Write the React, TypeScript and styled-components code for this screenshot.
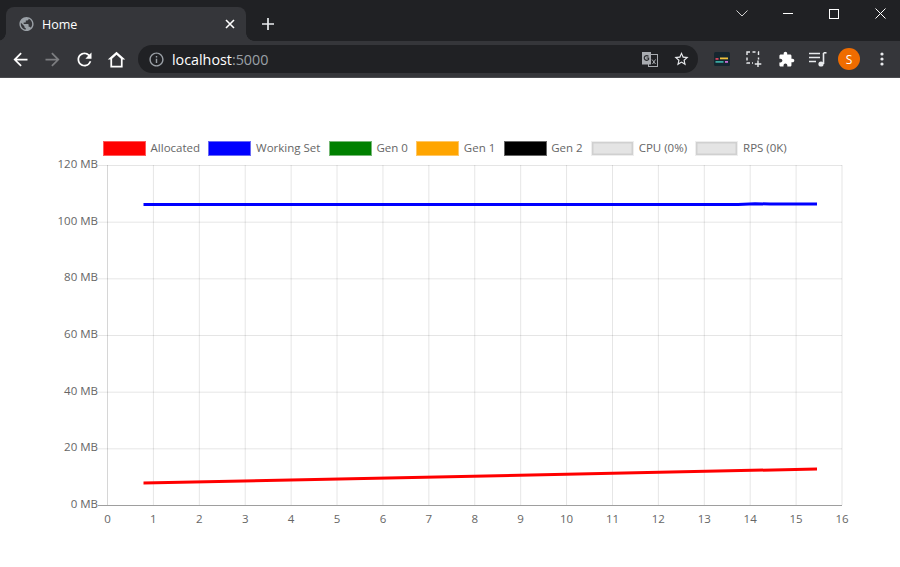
import React from 'react';
import styled, { createGlobalStyle } from 'styled-components';

const GlobalStyle = createGlobalStyle`
  html, body {
    margin: 0;
    padding: 0;
    background: #ffffff;
    font-family: "Open Sans", "Noto Sans", sans-serif;
  }
`;

const Page = styled.div`
  width: 900px;
  height: 567px;
  overflow: hidden;
  display: flex;
  flex-direction: column;
`;

const TitleBar = styled.div`
  height: 41px;
  background: #202124;
  display: flex;
  align-items: flex-end;
  padding-left: 6px;
`;

const Tab = styled.div`
  position: relative;
  width: 240px;
  height: 34px;
  box-sizing: border-box;
  background: #35363a;
  border-radius: 8px 8px 0 0;
  display: flex;
  align-items: center;
  padding: 0 11px 0 12px;
  color: #ffffff;
  font-size: 12.5px;

  &::before,
  &::after {
    content: '';
    position: absolute;
    bottom: 0;
    width: 8px;
    height: 8px;
  }

  &::before {
    left: -8px;
    background: radial-gradient(circle at 0 0, #202124 7.5px, #35363a 8px);
  }

  &::after {
    right: -8px;
    background: radial-gradient(circle at 100% 0, #202124 7.5px, #35363a 8px);
  }
`;

const TabTitle = styled.span`
  flex: 1;
  margin-left: 7px;
  margin-top: 1px;
`;

const NewTab = styled.div`
  width: 28px;
  height: 28px;
  margin-left: 8px;
  margin-bottom: 3px;
  display: flex;
  align-items: center;
  justify-content: center;
  color: #e8eaed;
`;

const WindowControls = styled.div`
  margin-left: auto;
  margin-right: -3px;
  align-self: flex-start;
  display: flex;
  color: #ffffff;
`;

const WindowButton = styled.div`
  width: 46px;
  height: 27px;
  display: flex;
  align-items: center;
  justify-content: center;
`;

const Toolbar = styled.div`
  height: 36px;
  background: #35363a;
  border-bottom: 1px solid #4a4b4f;
  display: flex;
  align-items: center;
  padding: 0 2px 0 4px;
`;

const IconButton = styled.div<{ $tone?: string }>`
  width: 32px;
  height: 32px;
  flex: none;
  display: flex;
  align-items: center;
  justify-content: center;
  color: ${p => p.$tone || '#ffffff'};
`;

const Omnibox = styled.div`
  flex: 1;
  height: 28px;
  margin: 0 8px 0 6px;
  border-radius: 14px;
  background: #202124;
  display: flex;
  align-items: center;
  padding: 0 8px 0 10px;
  font-size: 14.3px;
  color: #ffffff;
`;

const Url = styled.div`
  flex: 1;
  margin-left: 7px;

  span {
    color: #9aa0a6;
  }
`;

const OmniIcon = styled.div<{ $gap?: number; $tone?: string }>`
  width: 17px;
  height: 17px;
  display: flex;
  align-items: center;
  justify-content: center;
  margin-left: ${p => p.$gap || 0}px;
  color: ${p => p.$tone || '#e8eaed'};
`;

const Avatar = styled.div`
  width: 22px;
  height: 22px;
  margin-right: 2px;
  border-radius: 50%;
  background: #ef6c00;
  color: #ffffff;
  font-size: 12px;
  display: flex;
  align-items: center;
  justify-content: center;
`;

const Content = styled.main`
  flex: 1;
  display: flex;
  flex-direction: column;
  padding-top: 62px;
`;

const Legend = styled.div`
  display: flex;
  align-items: center;
  padding-left: 103px;
  height: 17px;
`;

const LegendItem = styled.div`
  display: flex;
  align-items: flex-start;
  margin-right: 8.4px;
  color: #666666;
  font-size: 11.5px;
  white-space: nowrap;
  line-height: 13px;
`;

const Swatch = styled.div<{ $fill: string; $edge: string; $ring?: string }>`
  width: 43px;
  height: 15px;
  box-sizing: border-box;
  margin-right: 4.6px;
  background: ${p => p.$fill};
  border: 1px solid ${p => p.$ring || p.$edge};
  box-shadow: ${p => (p.$ring ? `inset 0 0 0 1.5px ${p.$edge}` : 'none')};
`;

const ChartSvg = styled.svg`
  display: block;
  width: 900px;
  height: 400px;
`;

const AxisLabel = styled.text`
  font-family: "Open Sans", "Noto Sans", sans-serif;
  font-size: 11.5px;
  fill: #666666;
`;

const legendItems = [
  { label: 'Allocated', fill: '#ff0000', edge: '#ff5a5a' },
  { label: 'Working Set', fill: '#0000ff', edge: '#6a6af5' },
  { label: 'Gen 0', fill: '#008000', edge: '#77b877' },
  { label: 'Gen 1', fill: '#ffa500', edge: '#ffc766' },
  { label: 'Gen 2', fill: '#000000', edge: '#666666' },
  { label: 'CPU (0%)', fill: '#e4e4e4', edge: '#d0d0d0', ring: '#eeeeee' },
  { label: 'RPS (0K)', fill: '#e4e4e4', edge: '#d0d0d0', ring: '#eeeeee' },
];

// chart area in svg coordinates, the svg starts at y=157 of the page
const TOP = 8;
const BOTTOM = 348;
const LEFT = 107.5;
const RIGHT = 842;
const xAt = (v: number) => LEFT + ((RIGHT - LEFT) * v) / 16;
const yAt = (mb: number) => BOTTOM - ((BOTTOM - TOP) * mb) / 120;

const Chart = () => {
  const xTicks = Array.from({ length: 17 }, (_, i) => i);
  const yTicks = [0, 20, 40, 60, 80, 100, 120];
  return (
    <ChartSvg viewBox="0 0 900 400">
      {xTicks.map(t => (
        <line
          key={t}
          x1={xAt(t)}
          x2={xAt(t)}
          y1={TOP}
          y2={BOTTOM}
          stroke={t === 0 ? 'rgba(0,0,0,0.16)' : 'rgba(0,0,0,0.1)'}
          strokeWidth={1}
        />
      ))}
      {yTicks.map(t => (
        <line
          key={t}
          x1={98}
          x2={RIGHT}
          y1={yAt(t) + 0.5}
          y2={yAt(t) + 0.5}
          stroke={t === 0 ? 'rgba(0,0,0,0.38)' : 'rgba(0,0,0,0.1)'}
          strokeWidth={1}
        />
      ))}
      {yTicks.map(t => (
        <AxisLabel key={t} x={98} y={yAt(t) + 3} textAnchor="end">
          {t} MB
        </AxisLabel>
      ))}
      {xTicks.map(t => (
        <AxisLabel key={t} x={xAt(t)} y={366} textAnchor="middle">
          {t}
        </AxisLabel>
      ))}
      <polyline
        points="143.5,326 817,312"
        fill="none"
        stroke="#ff0000"
        strokeWidth={3}
      />
      <polyline
        points="143.5,47.6 738,47.6 755,46.7 770,47 817,47"
        fill="none"
        stroke="#0000ff"
        strokeWidth={3}
      />
    </ChartSvg>
  );
};

const Icon: React.FC<{ d: string; size?: number }> = ({ d, size = 20 }) => (
  <svg width={size} height={size} viewBox="0 0 24 24" fill="currentColor">
    <path d={d} fillRule="evenodd" />
  </svg>
);

const paths = {
  globe:
    'M12 2C6.48 2 2 6.48 2 12s4.48 10 10 10 10-4.48 10-10S17.52 2 12 2zm-1 17.93c-3.95-.49-7-3.85-7-7.93 0-.62.08-1.21.21-1.79L9 15v1c0 1.1.9 2 2 2v1.93zm6.9-2.54c-.26-.81-1-1.39-1.9-1.39h-1v-3c0-.55-.45-1-1-1H8v-2h2c.55 0 1-.45 1-1V7h2c1.1 0 2-.9 2-2v-.41c2.93 1.19 5 4.06 5 7.41 0 2.08-.8 3.97-2.1 5.39z',
  back: 'M20 11H7.83l5.59-5.59L12 4l-8 8 8 8 1.41-1.41L7.83 13H20v-2z',
  forward: 'M4 11h12.17l-5.59-5.59L12 4l8 8-8 8-1.41-1.41L16.17 13H4v-2z',
  reload:
    'M17.65 6.35A7.958 7.958 0 0 0 12 4c-4.42 0-7.99 3.58-7.99 8s3.57 8 7.99 8c3.73 0 6.84-2.55 7.73-6h-2.08A5.99 5.99 0 0 1 12 18c-3.31 0-6-2.69-6-6s2.69-6 6-6c1.66 0 3.14.69 4.22 1.78L13 11h7V4l-2.35 2.35z',
  home: 'M12 3L2 12h3v9h14v-9h3L12 3zm0 3.7l5 4.5V19H7v-7.8l5-4.5z',
  info: 'M11 7h2v2h-2zm0 4h2v6h-2zm1-9C6.48 2 2 6.48 2 12s4.48 10 10 10 10-4.48 10-10S17.52 2 12 2zm0 18c-4.41 0-8-3.59-8-8s3.59-8 8-8 8 3.59 8 8-3.59 8-8 8z',
  star: 'M22 9.24l-7.19-.62L12 2 9.19 8.63 2 9.24l5.46 4.73L5.82 21 12 17.27 18.18 21l-1.63-7.03L22 9.24zM12 15.4l-3.76 2.27 1-4.28-3.32-2.88 4.38-.38L12 6.1l1.71 4.04 4.38.38-3.32 2.88 1 4.28L12 15.4z',
  puzzle:
    'M20.5 11H19V7c0-1.1-.9-2-2-2h-4V3.5C13 2.12 11.88 1 10.5 1S8 2.12 8 3.5V5H4c-1.1 0-1.99.9-1.99 2v3.8H3.5c1.49 0 2.7 1.21 2.7 2.7s-1.21 2.7-2.7 2.7H2V20c0 1.1.9 2 2 2h3.8v-1.5c0-1.49 1.21-2.7 2.7-2.7 1.49 0 2.7 1.21 2.7 2.7V22H17c1.1 0 2-.9 2-2v-4h1.5c1.38 0 2.5-1.12 2.5-2.5S21.88 11 20.5 11z',
};

const TranslateIcon = () => (
  <svg width="16" height="15" viewBox="0 0 16 15">
    <rect x="6.5" y="2.5" width="9" height="12" fill="#202124" stroke="#a8abb0" strokeWidth="1" />
    <path d="M0 0h9v12.5H0z" fill="#a8abb0" />
    <path d="M6.5 4.4A2.4 2.4 0 1 0 6.6 7.4V6H4.6" fill="none" stroke="#2b2c2f" strokeWidth="1.2" />
    <path d="M10 7.5l3.5 4.5M13.5 7.5L10.5 12" stroke="#a8abb0" strokeWidth="1" fill="none" />
  </svg>
);

const DashboardExtension = () => (
  <svg width="16" height="14" viewBox="0 0 16 14">
    <rect width="16" height="14" rx="1.5" fill="#15262f" />
    <rect x="6" y="5.5" width="8" height="1.8" fill="#f0c33c" />
    <rect x="1.5" y="6" width="3" height="1.8" fill="#d6455d" />
    <rect x="1.5" y="9" width="8" height="1.8" fill="#3aa7a0" />
    <rect x="11" y="9" width="3" height="1.8" fill="#c86dd7" />
  </svg>
);

const CaptureIcon = () => (
  <svg width="16" height="16" viewBox="0 0 16 16" fill="none" stroke="#e8eaed" strokeWidth="1.4">
    <path d="M1 4V1h3M6.5 1h3M12 1h.5v3M1 6.5v3M1 11.5V12h3M6 12h1M12.5 6.5v2" />
    <path d="M12 9.5v6.5M8.8 13h6.5" />
  </svg>
);

const QueueMusicIcon = () => (
  <svg width="18" height="16" viewBox="0 0 18 16" fill="none" stroke="#e8eaed" strokeWidth="1.5">
    <path d="M0 2.5h11M0 6.5h11M0 10.5h7" />
    <path d="M14.5 2v11" strokeWidth="1.6" />
    <path d="M14.5 1.8H17.5" strokeWidth="1.6" />
    <circle cx="12" cy="13" r="2.6" fill="#e8eaed" stroke="none" />
  </svg>
);

const DotsIcon = () => (
  <svg width="4" height="14" viewBox="0 0 4 14" fill="#e8eaed">
    <circle cx="2" cy="2" r="1.6" />
    <circle cx="2" cy="7" r="1.6" />
    <circle cx="2" cy="12" r="1.6" />
  </svg>
);

const CloseSmall = () => (
  <svg width="10" height="10" viewBox="0 0 10 10" stroke="#ffffff" strokeWidth="1.6">
    <path d="M1 1l8 8M9 1l-8 8" />
  </svg>
);

const PlusIcon = () => (
  <svg width="12" height="12" viewBox="0 0 12 12" stroke="#e8eaed" strokeWidth="1.7">
    <path d="M6 0v12M0 6h12" />
  </svg>
);

const App = () => (
  <Page>
    <GlobalStyle />
    <TitleBar>
      <Tab>
        <OmniIcon $tone="#9aa0a6">
          <Icon d={paths.globe} size={18} />
        </OmniIcon>
        <TabTitle>Home</TabTitle>
        <CloseSmall />
      </Tab>
      <NewTab>
        <PlusIcon />
      </NewTab>
      <WindowControls>
        <WindowButton>
          <svg width="12" height="7" viewBox="0 0 12 7" fill="none" stroke="#d0d0d0" strokeWidth="1">
            <path d="M.5.5L6 6l5.5-5.5" />
          </svg>
        </WindowButton>
        <WindowButton>
          <svg width="10" height="1" viewBox="0 0 10 1" fill="#ffffff">
            <rect width="10" height="1" />
          </svg>
        </WindowButton>
        <WindowButton>
          <svg width="10" height="10" viewBox="0 0 10 10" fill="none" stroke="#ffffff" strokeWidth="1">
            <rect x=".5" y=".5" width="9" height="9" />
          </svg>
        </WindowButton>
        <WindowButton>
          <svg width="11" height="11" viewBox="0 0 11 11" fill="none" stroke="#ffffff" strokeWidth="1">
            <path d="M.5.5l10 10M10.5.5l-10 10" />
          </svg>
        </WindowButton>
      </WindowControls>
    </TitleBar>
    <Toolbar>
      <IconButton>
        <Icon d={paths.back} size={21} />
      </IconButton>
      <IconButton $tone="#7c7d80">
        <Icon d={paths.forward} size={21} />
      </IconButton>
      <IconButton>
        <Icon d={paths.reload} size={21} />
      </IconButton>
      <IconButton>
        <Icon d={paths.home} size={21} />
      </IconButton>
      <Omnibox>
        <OmniIcon $tone="#9aa0a6">
          <Icon d={paths.info} size={17} />
        </OmniIcon>
        <Url>
          localhost<span>:5000</span>
        </Url>
        <OmniIcon>
          <TranslateIcon />
        </OmniIcon>
        <OmniIcon $gap={15}>
          <Icon d={paths.star} size={18} />
        </OmniIcon>
      </Omnibox>
      <IconButton>
        <DashboardExtension />
      </IconButton>
      <IconButton>
        <CaptureIcon />
      </IconButton>
      <IconButton>
        <Icon d={paths.puzzle} size={17} />
      </IconButton>
      <IconButton>
        <QueueMusicIcon />
      </IconButton>
      <IconButton>
        <Avatar>S</Avatar>
      </IconButton>
      <IconButton>
        <DotsIcon />
      </IconButton>
    </Toolbar>
    <Content>
      <Legend>
        {legendItems.map(item => (
          <LegendItem key={item.label}>
            <Swatch $fill={item.fill} $edge={item.edge} $ring={item.ring} />
            {item.label}
          </LegendItem>
        ))}
      </Legend>
      <Chart />
    </Content>
  </Page>
);

export default App;
